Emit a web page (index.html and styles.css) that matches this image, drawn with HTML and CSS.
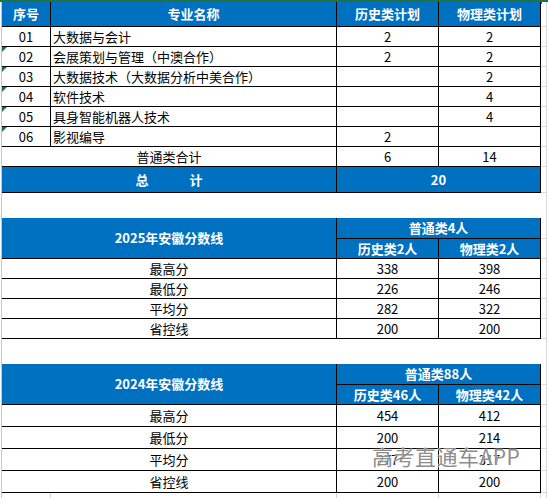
FILE: index.html
```html
<!DOCTYPE html>
<html lang="zh-CN">
<head>
<meta charset="utf-8">
<title>招生计划</title>
<link rel="stylesheet" href="styles.css">
</head>
<body>
<div class="topbar"><span class="handle"></span></div>
<div class="sheet">
  <table class="t">
    <colgroup><col class="c1"><col class="c2"><col class="c3"><col class="c4"><col class="cg"></colgroup>
    <tr class="hd"><th class="blue">序号</th><th class="blue">专业名称</th><th class="blue">历史类计划</th><th class="blue">物理类计划</th><td class="g"></td></tr>
    <tr class="r"><td>01</td><td class="l">大数据与会计</td><td>2</td><td>2</td><td class="g"></td></tr>
    <tr class="r"><td class="mark">02</td><td class="l">会展策划与管理（中澳合作）</td><td>2</td><td>2</td><td class="g"></td></tr>
    <tr class="r"><td class="mark">03</td><td class="l">大数据技术（大数据分析中美合作）</td><td></td><td>2</td><td class="g"></td></tr>
    <tr class="r"><td class="mark">04</td><td class="l">软件技术</td><td></td><td>4</td><td class="g"></td></tr>
    <tr class="r"><td class="mark">05</td><td class="l">具身智能机器人技术</td><td></td><td>4</td><td class="g"></td></tr>
    <tr class="r"><td class="mark">06</td><td class="l">影视编导</td><td>2</td><td></td><td class="g"></td></tr>
    <tr class="r"><td colspan="2">普通类合计</td><td>6</td><td>14</td><td class="g"></td></tr>
    <tr class="tot"><th class="blue" colspan="2">总<span class="gap"></span>计</th><th class="blue" colspan="2">20</th><td class="g"></td></tr>
  </table>
  <div class="spacer"></div>
  <table class="t">
    <colgroup><col class="c1"><col class="c2"><col class="c3"><col class="c4"><col class="cg"></colgroup>
    <tr class="h1"><th class="blue" colspan="2" rowspan="2">2025年安徽分数线</th><th class="blue" colspan="2">普通类4人</th><td class="g"></td></tr>
    <tr class="h2"><th class="blue">历史类2人</th><th class="blue">物理类2人</th><td class="g"></td></tr>
    <tr class="r"><td colspan="2">最高分</td><td>338</td><td>398</td><td class="g"></td></tr>
    <tr class="r"><td colspan="2">最低分</td><td>226</td><td>246</td><td class="g"></td></tr>
    <tr class="r"><td colspan="2">平均分</td><td>282</td><td>322</td><td class="g"></td></tr>
    <tr class="r"><td colspan="2">省控线</td><td>200</td><td>200</td><td class="g"></td></tr>
  </table>
  <div class="spacer"></div>
  <table class="t">
    <colgroup><col class="c1"><col class="c2"><col class="c3"><col class="c4"><col class="cg"></colgroup>
    <tr class="h1"><th class="blue" colspan="2" rowspan="2">2024年安徽分数线</th><th class="blue" colspan="2">普通类88人</th><td class="g"></td></tr>
    <tr class="h2"><th class="blue">历史类46人</th><th class="blue">物理类42人</th><td class="g"></td></tr>
    <tr class="r2"><td colspan="2">最高分</td><td>454</td><td>412</td><td class="g"></td></tr>
    <tr class="r2"><td colspan="2">最低分</td><td>200</td><td>214</td><td class="g"></td></tr>
    <tr class="r2"><td colspan="2">平均分</td><td>277</td><td>317</td><td class="g"></td></tr>
    <tr class="r2"><td colspan="2">省控线</td><td>200</td><td>200</td><td class="g"></td></tr>
    <tr class="tail"><td class="gl"></td><td class="gl"></td><td class="gl"></td><td class="gl"></td><td class="gt"></td></tr>
  </table>
  <div class="watermark">高考直通车APP</div>
</div>
</body>
</html>
```
FILE: styles.css
```css
html, body {
  margin: 0;
  padding: 0;
  background: #fff;
}
body {
  font-family: "Noto Sans CJK SC", "Microsoft YaHei", sans-serif;
  font-size: 13px;
  color: #000;
  overflow: hidden;
}
.topbar {
  height: 2px;
  background: #217346;
  position: relative;
}
.handle {
  position: absolute;
  left: 538px;
  top: 0;
  width: 4px;
  height: 4px;
  background: #217346;
}
.sheet {
  position: relative;
  margin-left: 1px;
  width: 544px;
  border-left: 1px solid #c6c6c6;
  border-right: 1px solid #d9d9d9;
}
.t {
  border-collapse: separate;
  border-spacing: 0;
  table-layout: fixed;
  width: 544px;
}
.c1 { width: 49px; }
.c2 { width: 286px; }
.c3 { width: 102px; }
.c4 { width: 102px; }
.cg { width: 5px; }
.t td, .t th {
  padding: 0;
  box-sizing: border-box;
  border-right: 1px solid #000;
  border-bottom: 1px solid #000;
  line-height: 18px;
  text-align: center;
  white-space: nowrap;
  overflow: hidden;
  font-weight: normal;
  vertical-align: middle;
}
.t th.blue {
  background: #0070c0;
  color: #fff;
  font-weight: bold;
}
.t td.l {
  text-align: left;
  padding-left: 2px;
}
.t td.g {
  border-right: none;
  border-bottom: 1px solid #dcdcdc;
}
.t td.mark {
  position: relative;
}
.t td.mark::before {
  content: "";
  position: absolute;
  left: 0;
  top: 0;
  width: 0;
  height: 0;
  border-top: 5px solid #1f7a3a;
  border-right: 5px solid transparent;
}
.hd { height: 25px; }
.r { height: 20px; }
.r2 { height: 22px; }
.tot { height: 26px; }
.h1 { height: 21px; }
.h2 { height: 20px; }
.gap {
  display: inline-block;
  width: 41px;
}
.spacer {
  height: 25px;
}
.tail { height: 6px; }
.t td.gl {
  border-right: 1px solid #d4d4d4;
  border-bottom: none;
}
.t td.gt {
  border: none;
}
.watermark {
  position: absolute;
  left: 370px;
  top: 442px;
  font-size: 21px;
  line-height: 24px;
  color: rgba(110, 110, 110, 0.8);
  text-shadow: 0 0 2px #fff, 0 0 1px #fff;
  white-space: nowrap;
  letter-spacing: 0.5px;
}
```
